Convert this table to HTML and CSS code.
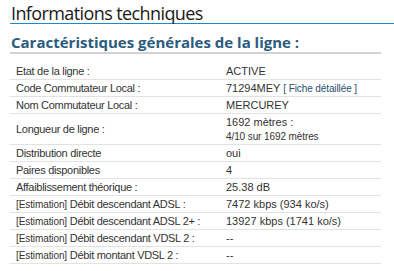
FILE: index.html
```html
<!DOCTYPE html>
<html lang="fr">
<head>
<meta charset="utf-8">
<link rel="stylesheet" href="styles.css">
</head>
<body>
<div class="page">
  <h1 class="title">Informations techniques</h1>
  <h2 class="subtitle">Caractéristiques générales de la ligne :</h2>
  <table class="info">
    <tr><td class="lbl">Etat de la ligne :</td><td class="val">ACTIVE</td></tr>
    <tr><td class="lbl">Code Commutateur Local :</td><td class="val">71294MEY <span class="small link">[ Fiche détaillée ]</span></td></tr>
    <tr><td class="lbl">Nom Commutateur Local :</td><td class="val">MERCUREY</td></tr>
    <tr class="tall"><td class="lbl">Longueur de ligne :</td><td class="val">1692 mètres :<br><span class="small">4/10 sur 1692 mètres</span></td></tr>
    <tr><td class="lbl">Distribution directe</td><td class="val">oui</td></tr>
    <tr><td class="lbl">Paires disponibles</td><td class="val">4</td></tr>
    <tr><td class="lbl">Affaiblissement théorique :</td><td class="val">25.38 dB</td></tr>
    <tr><td class="lbl"><span class="small">[Estimation]</span> Débit descendant ADSL :</td><td class="val">7472 kbps (934 ko/s)</td></tr>
    <tr><td class="lbl"><span class="small">[Estimation]</span> Débit descendant ADSL 2+ :</td><td class="val">13927 kbps (1741 ko/s)</td></tr>
    <tr><td class="lbl"><span class="small">[Estimation]</span> Débit descendant VDSL 2 :</td><td class="val">--</td></tr>
    <tr><td class="lbl"><span class="small">[Estimation]</span> Débit montant VDSL 2 :</td><td class="val">--</td></tr>
  </table>
</div>
</body>
</html>
```

FILE: styles.css
```css
html, body {
  margin: 0;
  padding: 0;
  background: #ffffff;
}
.page {
  padding: 4px 0 0 10px;
}
.title {
  margin: 0;
  padding: 0 0 0 1px;
  font-family: "Open Sans", sans-serif;
  font-weight: normal;
  font-size: 18px;
  letter-spacing: -0.6px;
  line-height: 19px;
  color: #1a1a1a;
  border-bottom: 1px solid #1e8ac4;
}
.subtitle {
  margin: 9px 0 0 0;
  width: 370px;
  padding: 0 0 1px 1px;
  font-family: "Open Sans", sans-serif;
  font-weight: bold;
  font-size: 15px;
  line-height: 18px;
  letter-spacing: 0;
  color: #2a5b7e;
  border-bottom: 2px solid #d2d2d2;
}
.info {
  margin-top: 9px;
  width: 371px;
  border-collapse: collapse;
  font-family: "Liberation Sans", Arial, sans-serif;
  font-size: 11px;
  color: #333;
}
.info td {
  padding: 0 0 0 6px;
  height: 16px;
  border-bottom: 1px solid #e2e2e2;
  vertical-align: middle;
  line-height: 14px;
  white-space: nowrap;
}
.info td.lbl {
  width: 204px;
  letter-spacing: -0.3px;
}
.info tr.tall td {
  height: 30px;
}
.small {
  font-size: 10px;
  letter-spacing: -0.1px;
}
.link {
  color: #2a4f6b;
}
```
